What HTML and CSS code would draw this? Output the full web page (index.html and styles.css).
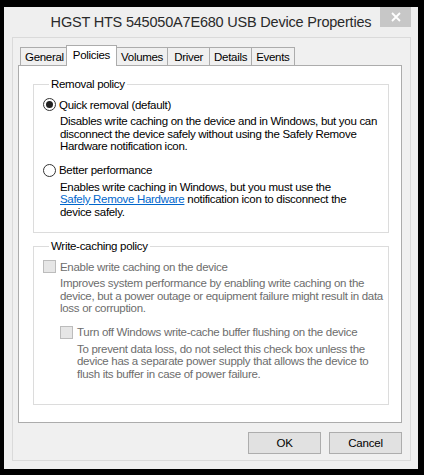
FILE: index.html
```html
<!DOCTYPE html>
<html>
<head>
<meta charset="utf-8">
<link rel="stylesheet" href="styles.css">
</head>
<body>
<div class="window">
  <div class="titlebar">
    <span class="title">HGST HTS 545050A7E680 USB Device Properties</span>
    <div class="close">
      <svg width="10" height="10" viewBox="0 0 10 10"><path d="M1 1L9 9M9 1L1 9" stroke="#fff" stroke-width="1.8" fill="none"/></svg>
    </div>
  </div>
  <div class="client">
    <div class="tabs">
      <div class="tab">General</div>
      <div class="tab active">Policies</div>
      <div class="tab">Volumes</div>
      <div class="tab">Driver</div>
      <div class="tab">Details</div>
      <div class="tab">Events</div>
    </div>
    <div class="panel">
      <fieldset class="group">
        <legend>Removal policy</legend>
        <div class="option">
          <span class="radio checked"></span><span>Quick removal (default)</span>
        </div>
        <p class="desc">Disables write caching on the device and in Windows, but you can<br>disconnect the device safely without using the Safely Remove<br>Hardware notification icon.</p>
        <div class="option second">
          <span class="radio"></span><span>Better performance</span>
        </div>
        <p class="desc">Enables write caching in Windows, but you must use the<br><span class="link">Safely Remove Hardware</span> notification icon to disconnect the<br>device safely.</p>
      </fieldset>
      <fieldset class="group disabled">
        <legend>Write-caching policy</legend>
        <div class="option">
          <span class="check"></span><span>Enable write caching on the device</span>
        </div>
        <p class="desc">Improves system performance by enabling write caching on the<br>device, but a power outage or equipment failure might result in data<br>loss or corruption.</p>
        <div class="nested">
          <div class="option second">
            <span class="check"></span><span>Turn off Windows write-cache buffer flushing on the device</span>
          </div>
          <p class="desc">To prevent data loss, do not select this check box unless the<br>device has a separate power supply that allows the device to<br>flush its buffer in case of power failure.</p>
        </div>
      </fieldset>
    </div>
    <div class="buttons">
      <button class="btn">OK</button>
      <button class="btn">Cancel</button>
    </div>
  </div>
</div>
</body>
</html>
```

FILE: styles.css
```css
html, body {
  margin: 0;
  padding: 0;
  background: #000;
}
body {
  width: 424px;
  height: 475px;
  overflow: hidden;
  font-family: "Liberation Sans", Arial, sans-serif;
  font-size: 11.5px;
  letter-spacing: -0.3px;
  color: #000;
}
.window {
  margin: 7px 0 0 4px;
  width: 414px;
  height: 462px;
  background: #efefef;
  box-sizing: border-box;
  position: relative;
  display: flex;
  flex-direction: column;
}
.titlebar {
  height: 30px;
  display: flex;
  align-items: center;
  justify-content: center;
  flex: none;
}
.title {
  font-size: 14.5px;
  letter-spacing: -0.2px;
  color: #2a2a2a;
  margin-top: -1px;
}
.close {
  position: absolute;
  top: 0;
  right: 7px;
  width: 31px;
  height: 20px;
  background: #c7c7c7;
  display: flex;
  align-items: center;
  justify-content: center;
}
.client {
  margin: 0 7px 8px 8px;
  flex: 1;
  border: 1px solid #dadada;
  background: #f0f0f0;
  padding: 7px 8px 0 5px;
  display: flex;
  flex-direction: column;
  min-width: 0;
}
.tabs {
  display: flex;
  align-items: flex-end;
  height: 20px;
  padding-left: 2px;
  position: relative;
  z-index: 1;
}
.tab {
  height: 18px;
  min-width: 43px;
  box-sizing: border-box;
  border: 1px solid #acacac;
  border-bottom: none;
  margin-right: -1px;
  padding: 0 4px;
  line-height: 18px;
  text-align: center;
  background: #f0f0f0;
  color: #000;
}
.tab.active {
  height: 21px;
  margin: 0 -1px -1px -2px;
  padding: 0 6px;
  line-height: 19px;
  background: #fff;
  position: relative;
  z-index: 2;
}
.tab.active + .tab {
  margin-left: 0;
}
.panel {
  height: 358px;
  box-sizing: border-box;
  border: 1px solid #acacac;
  background: #fff;
  padding: 12px 12px 0 14px;
  min-width: 0;
}
.group {
  margin: 0;
  min-width: 0;
  border: 1px solid #dcdcdc;
  padding: 0 8px 14px 9px;
}
.group + .group {
  margin-top: 7px;
  padding-bottom: 24px;
}
.group legend {
  padding: 0 2px;
  margin-left: 6px;
  line-height: 13px;
}
.option {
  display: flex;
  align-items: center;
  height: 13px;
  margin-top: 7px;
}
.option.second {
  margin-top: 11px;
}
.radio {
  width: 13px;
  height: 13px;
  box-sizing: border-box;
  border: 1px solid #333;
  border-radius: 50%;
  background: #fff;
  margin-right: 3px;
  display: flex;
  align-items: center;
  justify-content: center;
  flex: none;
}
.radio.checked::after {
  content: "";
  width: 7px;
  height: 7px;
  border-radius: 50%;
  background: #222;
}
.check {
  width: 13px;
  height: 13px;
  box-sizing: border-box;
  border: 1px solid #bcbcbc;
  background: #e6e6e6;
  margin-right: 4px;
  flex: none;
}
.desc {
  margin: 4px 0 0 17px;
  line-height: 12.5px;
  white-space: nowrap;
}
.link {
  color: #0066cc;
  text-decoration: underline;
}
.disabled .option,
.disabled .desc {
  color: #6d6d6d;
}
.disabled legend {
  color: #000;
}
.nested {
  margin-left: 17px;
}
.buttons {
  display: flex;
  justify-content: flex-end;
  gap: 8px;
  margin-top: 9px;
}
.btn {
  width: 73px;
  height: 22px;
  font-family: "Liberation Sans", Arial, sans-serif;
  font-size: 11.5px;
  letter-spacing: -0.2px;
  color: #000;
  background: #e1e1e1;
  border: 1px solid #adadad;
  padding: 0;
  margin: 0;
}
```
